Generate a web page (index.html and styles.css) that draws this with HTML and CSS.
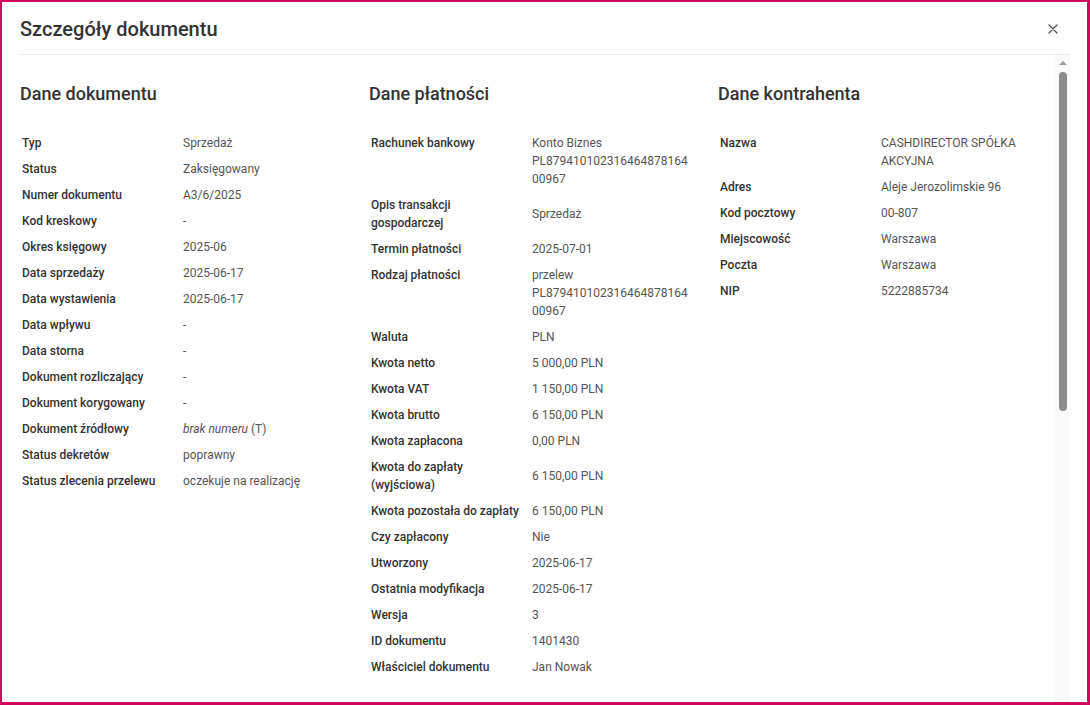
FILE: index.html
```html
<!DOCTYPE html>
<html lang="pl">
<head>
<meta charset="utf-8">
<title>Szczegóły dokumentu</title>
<link rel="stylesheet" href="styles.css">
</head>
<body>
<div class="frame">
  <header class="header">
    <h1 class="title">Szczegóły dokumentu</h1>
    <button class="close" aria-label="Zamknij">
      <svg width="10" height="10" viewBox="0 0 10 10"><path d="M1 1L9 9M9 1L1 9" stroke="#555" stroke-width="1.4" stroke-linecap="round"/></svg>
    </button>
  </header>
  <div class="body">
    <div class="content">
      <section class="col">
        <h2 class="col-title">Dane dokumentu</h2>
        <div class="rows">
          <div class="row"><div class="label">Typ</div><div class="value">Sprzedaż</div></div>
          <div class="row"><div class="label">Status</div><div class="value">Zaksięgowany</div></div>
          <div class="row"><div class="label">Numer dokumentu</div><div class="value">A3/6/2025</div></div>
          <div class="row"><div class="label">Kod kreskowy</div><div class="value">-</div></div>
          <div class="row"><div class="label">Okres księgowy</div><div class="value">2025-06</div></div>
          <div class="row"><div class="label">Data sprzedaży</div><div class="value">2025-06-17</div></div>
          <div class="row"><div class="label">Data wystawienia</div><div class="value">2025-06-17</div></div>
          <div class="row"><div class="label">Data wpływu</div><div class="value">-</div></div>
          <div class="row"><div class="label">Data storna</div><div class="value">-</div></div>
          <div class="row"><div class="label">Dokument rozliczający</div><div class="value">-</div></div>
          <div class="row"><div class="label">Dokument korygowany</div><div class="value">-</div></div>
          <div class="row"><div class="label">Dokument źródłowy</div><div class="value"><em>brak numeru</em> (T)</div></div>
          <div class="row"><div class="label">Status dekretów</div><div class="value">poprawny</div></div>
          <div class="row"><div class="label">Status zlecenia przelewu</div><div class="value">oczekuje na realizację</div></div>
        </div>
      </section>
      <section class="col">
        <h2 class="col-title">Dane płatności</h2>
        <div class="rows">
          <div class="row"><div class="label">Rachunek bankowy</div><div class="value">Konto Biznes<br>PL87941010231646487816400967</div></div>
          <div class="row"><div class="label">Opis transakcji gospodarczej</div><div class="value">Sprzedaż</div></div>
          <div class="row"><div class="label">Termin płatności</div><div class="value">2025-07-01</div></div>
          <div class="row"><div class="label">Rodzaj płatności</div><div class="value">przelew<br>PL87941010231646487816400967</div></div>
          <div class="row"><div class="label">Waluta</div><div class="value">PLN</div></div>
          <div class="row"><div class="label">Kwota netto</div><div class="value">5 000,00 PLN</div></div>
          <div class="row"><div class="label">Kwota VAT</div><div class="value">1 150,00 PLN</div></div>
          <div class="row"><div class="label">Kwota brutto</div><div class="value">6 150,00 PLN</div></div>
          <div class="row"><div class="label">Kwota zapłacona</div><div class="value">0,00 PLN</div></div>
          <div class="row"><div class="label">Kwota do zapłaty (wyjściowa)</div><div class="value">6 150,00 PLN</div></div>
          <div class="row"><div class="label">Kwota pozostała do zapłaty</div><div class="value">6 150,00 PLN</div></div>
          <div class="row"><div class="label">Czy zapłacony</div><div class="value">Nie</div></div>
          <div class="row"><div class="label">Utworzony</div><div class="value">2025-06-17</div></div>
          <div class="row"><div class="label">Ostatnia modyfikacja</div><div class="value">2025-06-17</div></div>
          <div class="row"><div class="label">Wersja</div><div class="value">3</div></div>
          <div class="row"><div class="label">ID dokumentu</div><div class="value">1401430</div></div>
          <div class="row"><div class="label">Właściciel dokumentu</div><div class="value">Jan Nowak</div></div>
        </div>
      </section>
      <section class="col">
        <h2 class="col-title">Dane kontrahenta</h2>
        <div class="rows">
          <div class="row"><div class="label">Nazwa</div><div class="value">CASHDIRECTOR SPÓŁKA AKCYJNA</div></div>
          <div class="row"><div class="label">Adres</div><div class="value">Aleje Jerozolimskie 96</div></div>
          <div class="row"><div class="label">Kod pocztowy</div><div class="value">00-807</div></div>
          <div class="row"><div class="label">Miejscowość</div><div class="value">Warszawa</div></div>
          <div class="row"><div class="label">Poczta</div><div class="value">Warszawa</div></div>
          <div class="row"><div class="label">NIP</div><div class="value">5222885734</div></div>
        </div>
      </section>
    </div>
    <div class="scrollbar">
      <div class="arrow"></div>
      <div class="thumb"></div>
    </div>
  </div>
</div>
</body>
</html>
```

FILE: styles.css
```css
* { box-sizing: border-box; }
html, body { margin: 0; padding: 0; background: #fff; }
body { font-family: Roboto, "Liberation Sans", sans-serif; color: #333; }

.frame {
  width: 1090px;
  height: 705px;
  border-style: solid;
  border-color: #cf0a5a;
  border-width: 2px 3px 3px 2px;
  display: flex;
  flex-direction: column;
  overflow: hidden;
}

.header {
  height: 53px;
  margin: 0 17px 0 18px;
  border-bottom: 1px solid #ececec;
  display: flex;
  align-items: center;
  justify-content: space-between;
  flex: none;
}
.title {
  margin: 0;
  font-size: 20px;
  font-weight: 500;
  color: #333;
  line-height: 24px;
  padding-top: 2px;
}
.close {
  border: 0;
  background: transparent;
  width: 24px;
  height: 24px;
  padding: 0;
  margin-right: 5px;
  margin-top: 2px;
  display: flex;
  align-items: center;
  justify-content: center;
}

.body {
  flex: 1;
  display: flex;
  min-height: 0;
  margin-right: 17px;
}
.content {
  flex: 1;
  padding: 27px 0 0 18px;
  display: grid;
  grid-template-columns: repeat(3, 329px);
  column-gap: 20px;
  align-items: start;
  overflow: hidden;
}
.col-title {
  margin: 0 0 24px 0;
  font-size: 18px;
  font-weight: 500;
  line-height: 24px;
  color: #333;
}
.rows { display: flex; flex-direction: column; }
.row {
  display: grid;
  grid-template-columns: 161px 1fr;
  font-size: 12px;
  line-height: 18px;
}
.label {
  padding: 4px 9px 4px 2px;
  font-weight: 500;
  color: #333;
  align-self: start;
}
.value {
  padding: 4px 8px 4px 2px;
  color: #555;
  align-self: center;
  overflow-wrap: anywhere;
}
.value em { font-style: italic; }

.scrollbar {
  width: 15px;
  flex: none;
  background: #fafafa;
  display: flex;
  flex-direction: column;
  align-items: center;
}
.arrow {
  margin-top: 6px;
  width: 0;
  height: 0;
  border-left: 4px solid transparent;
  border-right: 4px solid transparent;
  border-bottom: 4px solid #9a9a9a;
}
.thumb {
  margin-top: 7px;
  width: 8px;
  height: 339px;
  border-radius: 4px;
  background: #8c8c8c;
}
```
